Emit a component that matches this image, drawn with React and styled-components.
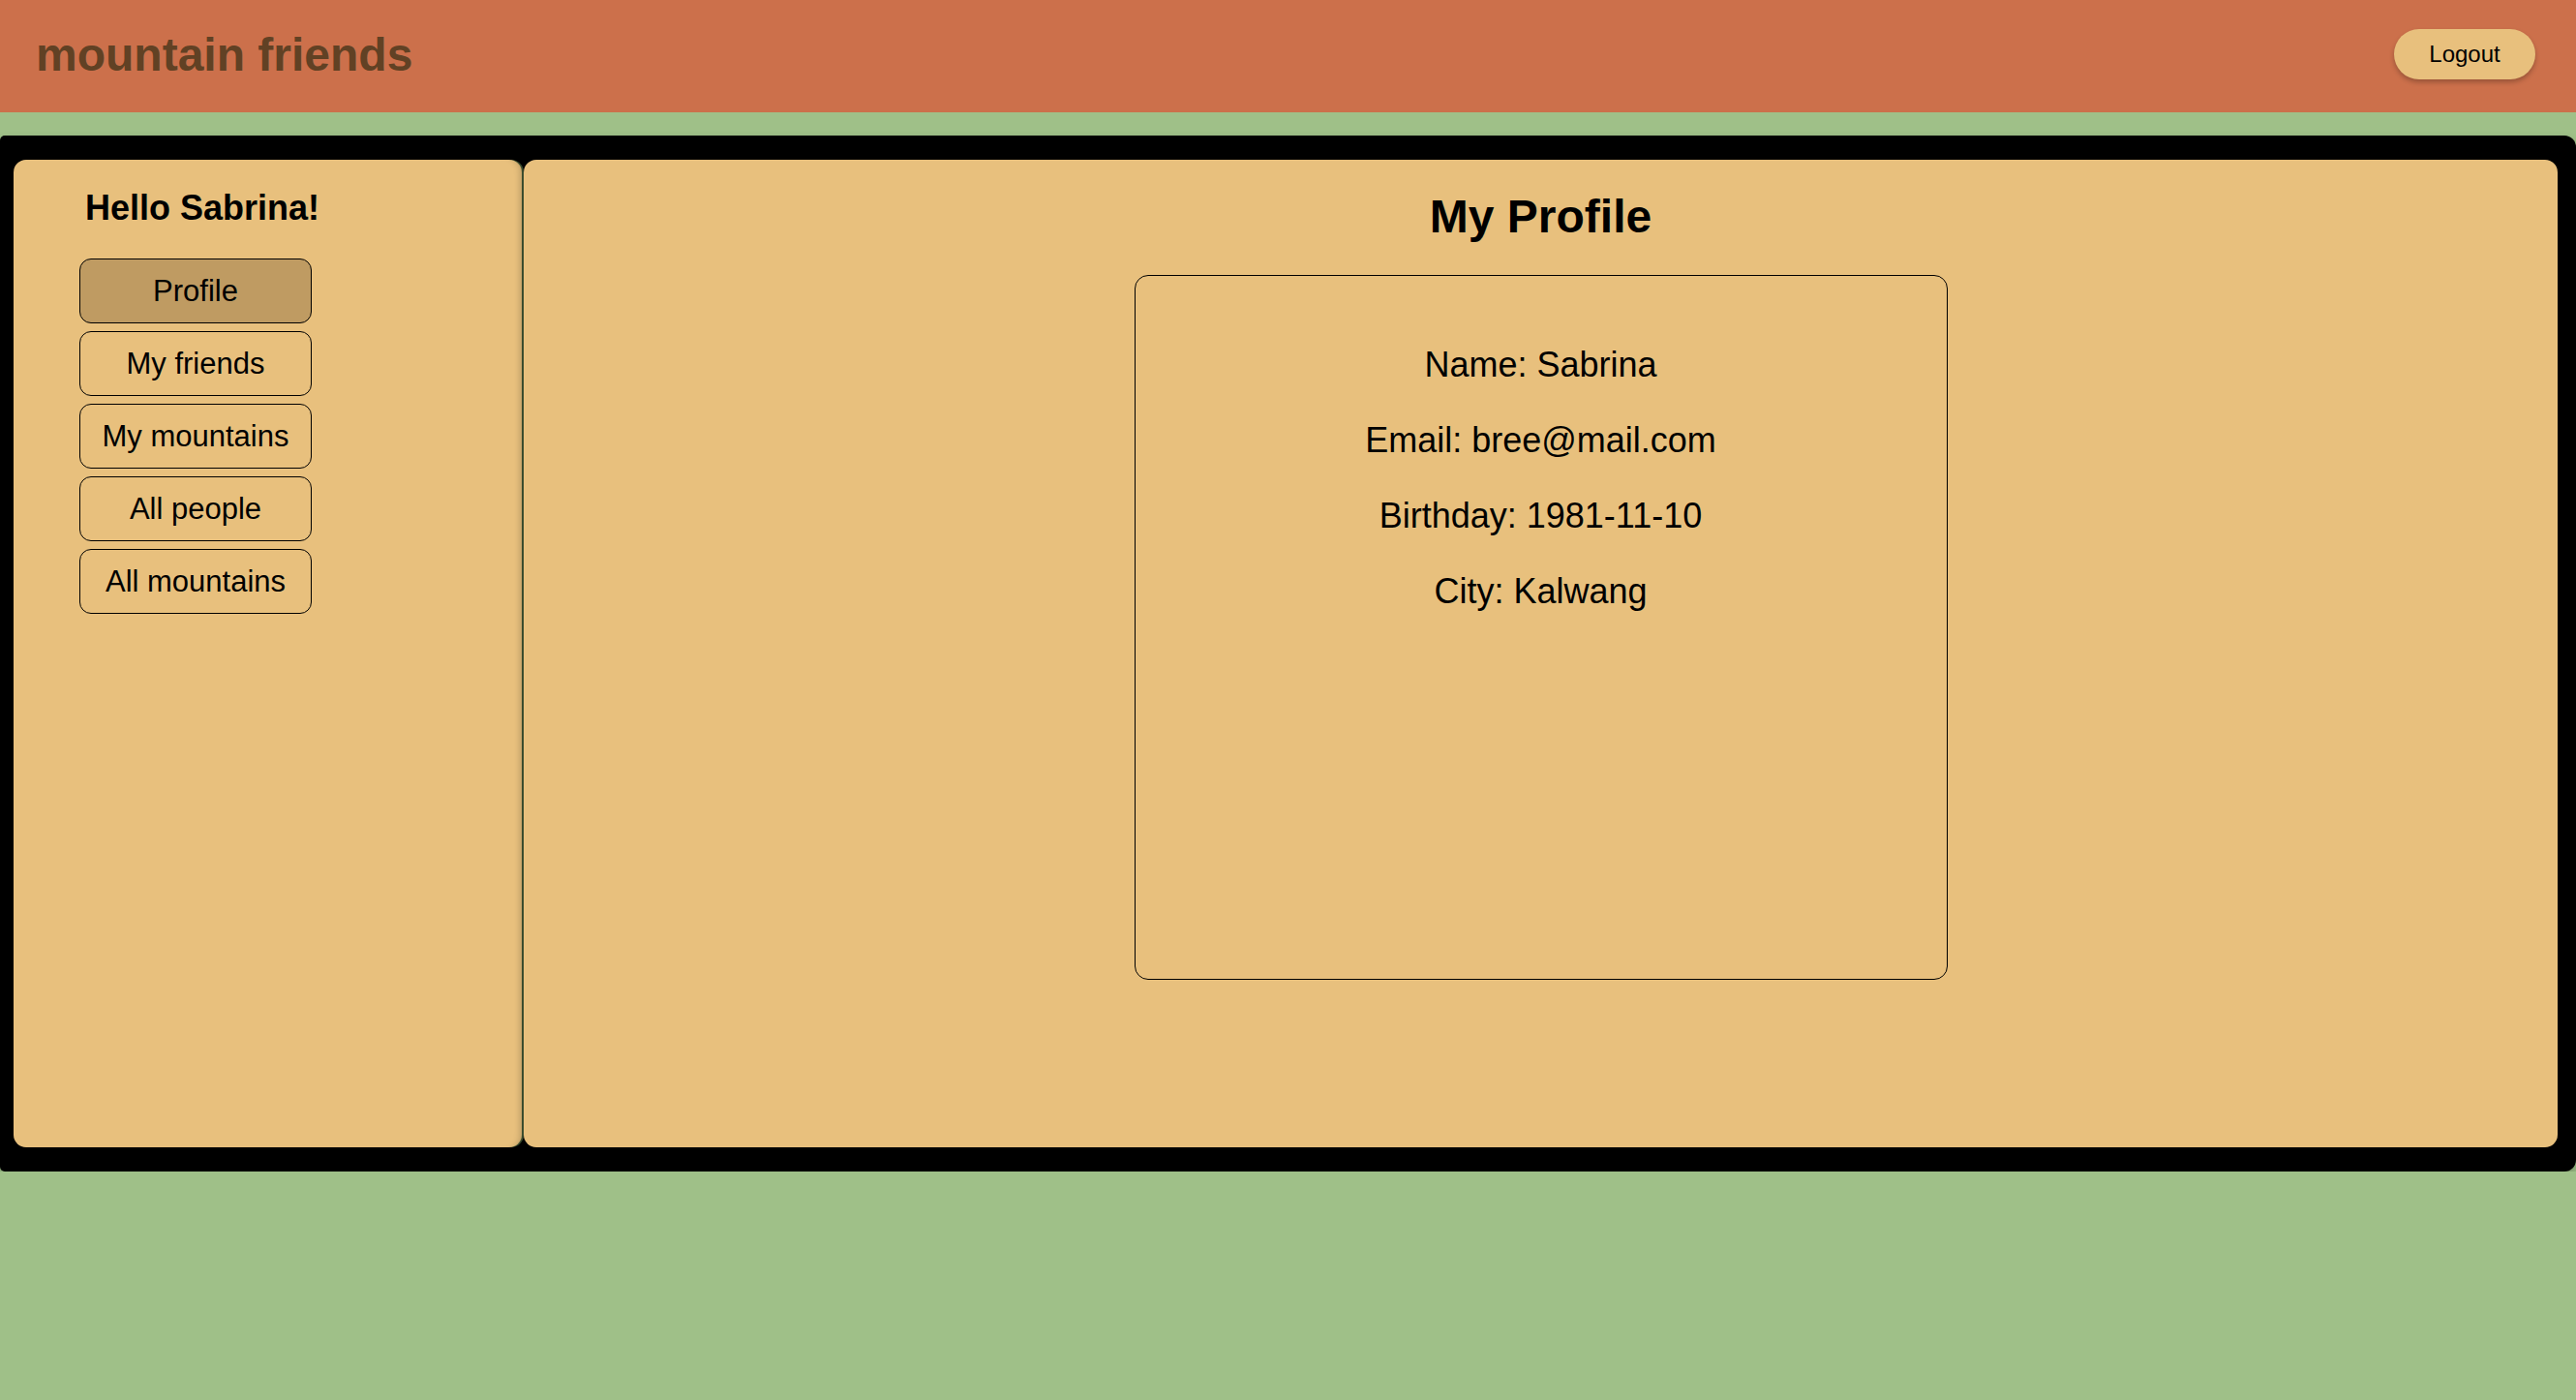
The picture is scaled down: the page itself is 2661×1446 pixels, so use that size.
import React from 'react'
import styled, { createGlobalStyle } from 'styled-components'

const GlobalStyle = createGlobalStyle`
  html, body {
    margin: 0;
    padding: 0;
    background: #9fc088;
    font-family: "Liberation Sans", Arial, sans-serif;
  }
`

// - - HEADER - - //

const Header = styled.header`
  height: 116px;
  background: #cc704b;
  display: flex;
  align-items: center;
  justify-content: space-between;
  padding: 0 42px 4px 37px;
  box-sizing: border-box;
`

const Brand = styled.h1`
  margin: 0;
  font-size: 48px;
  font-weight: bold;
  color: #614124;
`

const LogoutButton = styled.button`
  width: 146px;
  height: 52px;
  border: none;
  border-radius: 26px;
  background: #e8c07d;
  color: #000;
  font-family: inherit;
  font-size: 24px;
  box-shadow: 0 3px 5px rgba(0, 0, 0, 0.25);
  cursor: pointer;
`

// - - BODY - - //

const Frame = styled.div`
  margin-top: 24px;
  height: 1070px;
  box-sizing: border-box;
  background: #000;
  border-radius: 5px 12px 12px 5px;
  padding: 25px 19px 25px 14px;
  display: flex;
  gap: 2px;
  box-shadow: 0 5px 10px rgba(0, 0, 0, 0.25);
`

const Panel = styled.div`
  background: #e8c07d;
  border-radius: 13px;
  box-sizing: border-box;
`

const Sidebar = styled(Panel)`
  width: 525px;
  flex: none;
  padding: 29px 0 0 68px;
  box-shadow: inset -7px 0 6px -5px rgba(0, 0, 0, 0.18), 2px 0 0 #3b4d2e;
`

const Greeting = styled.h2`
  margin: 0 0 31px 6px;
  font-size: 36px;
  font-weight: bold;
  color: #000;
`

const NavList = styled.nav`
  display: flex;
  flex-direction: column;
  gap: 8px;
  width: 240px;
`

const NavButton = styled.button`
  height: 67px;
  border: 1px solid #000;
  border-radius: 12px;
  background: ${p => (p.active ? '#bf9b62' : 'transparent')};
  color: #000;
  font-family: inherit;
  font-size: 31px;
  cursor: pointer;
`

const Main = styled(Panel)`
  flex: 1;
  padding-top: 31px;
  text-align: center;
`

const Title = styled.h1`
  margin: 0 0 33px;
  font-size: 48px;
  font-weight: bold;
  color: #000;
`

const ProfileCard = styled.div`
  width: 840px;
  height: 728px;
  margin: 0 auto;
  box-sizing: border-box;
  border: 1px solid #000;
  border-radius: 14px;
  padding-top: 35px;

  p {
    margin: 36px 0;
    font-size: 36px;
    color: #000;
  }
`

const links = ['Profile', 'My friends', 'My mountains', 'All people', 'All mountains']

export default function App() {
  return (
    <>
      <GlobalStyle />
      <Header>
        <Brand>mountain friends</Brand>
        <LogoutButton>Logout</LogoutButton>
      </Header>
      <Frame>
        <Sidebar>
          <Greeting>Hello Sabrina!</Greeting>
          <NavList>
            {links.map(l => (
              <NavButton key={l} active={l === 'Profile'}>{l}</NavButton>
            ))}
          </NavList>
        </Sidebar>
        <Main>
          <Title>My Profile</Title>
          <ProfileCard>
            <p>Name: Sabrina</p>
            <p>Email: bree@mail.com</p>
            <p>Birthday: 1981-11-10</p>
            <p>City: Kalwang</p>
          </ProfileCard>
        </Main>
      </Frame>
    </>
  )
}
